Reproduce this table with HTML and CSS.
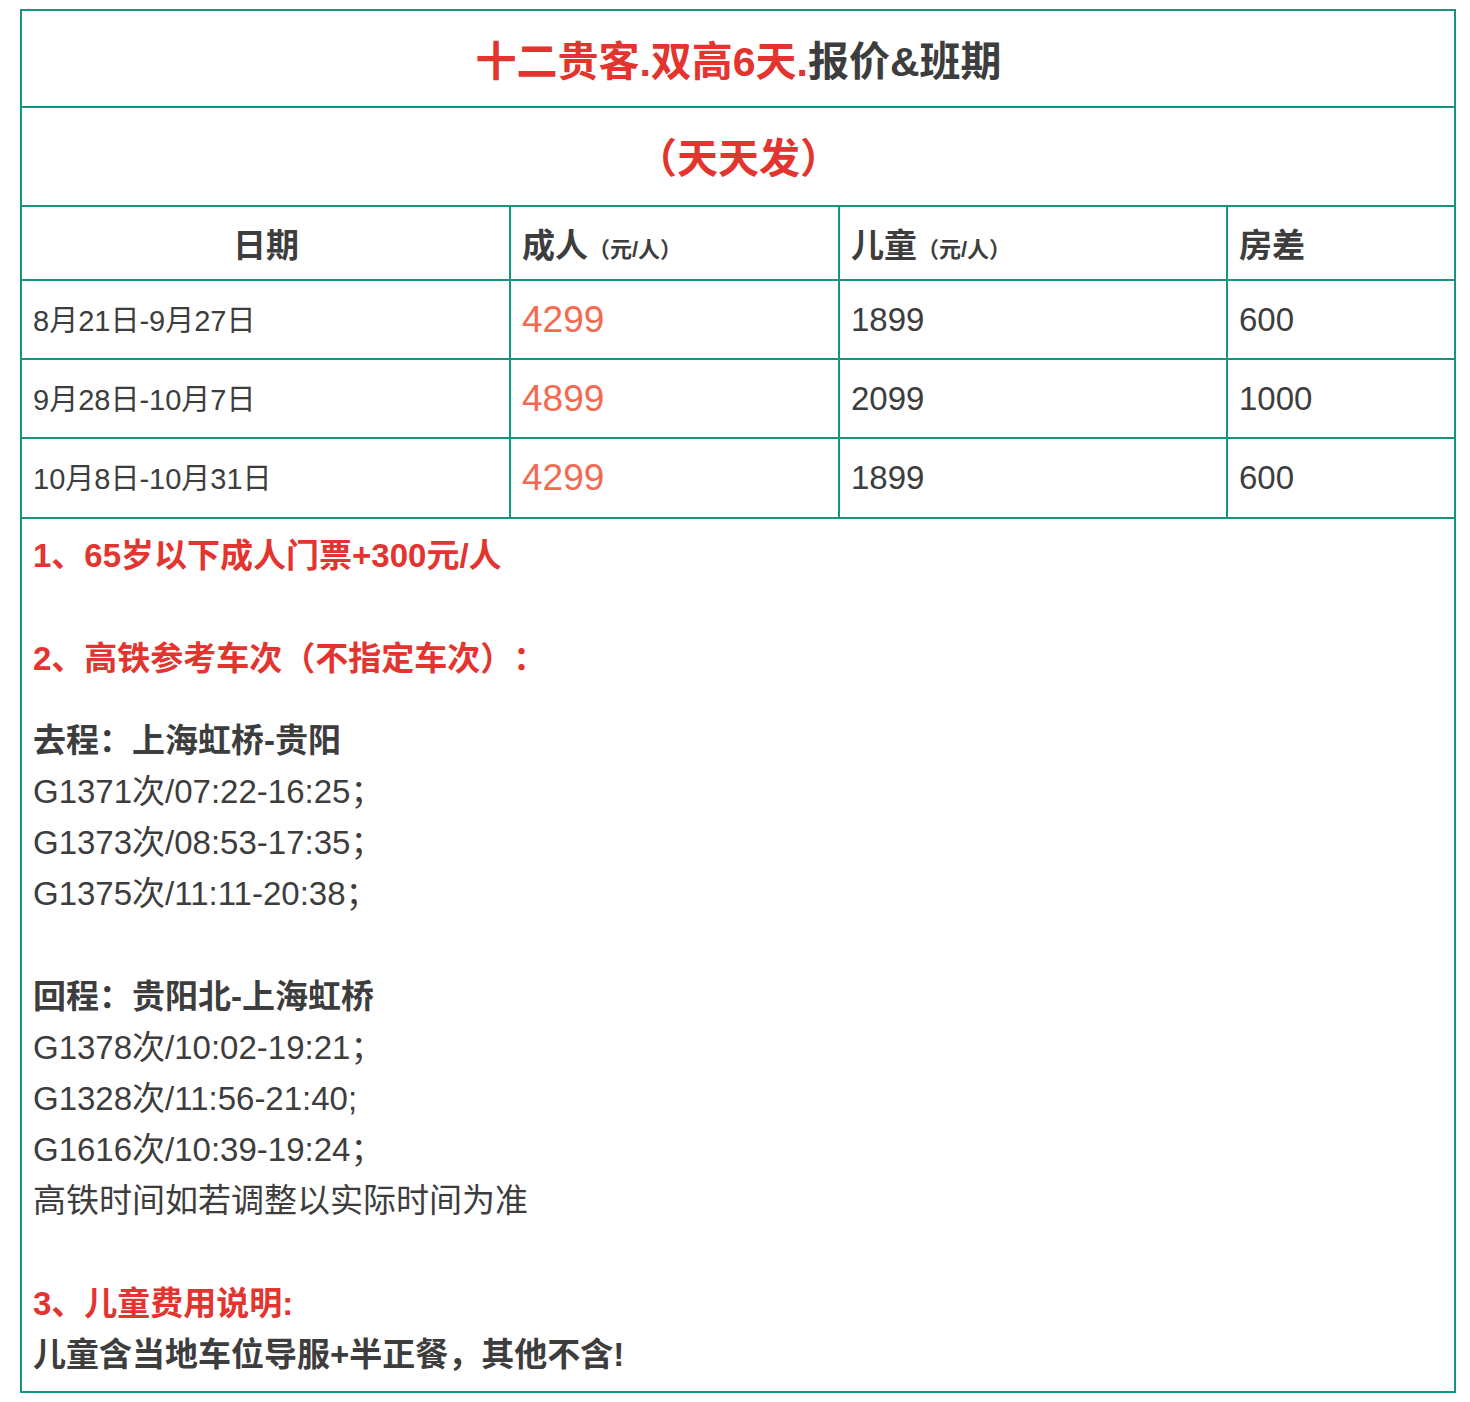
FILE: index.html
```html
<!DOCTYPE html>
<html lang="zh-CN">
<head>
<meta charset="utf-8">
<title>十二贵客.双高6天.报价&amp;班期</title>
<link rel="stylesheet" href="styles.css">
</head>
<body>
<table class="price-table">
  <colgroup>
    <col class="c1"><col class="c2"><col class="c3"><col class="c4">
  </colgroup>
  <tr class="row-title">
    <td colspan="4" class="title"><span class="red">十二贵客.双高6天.</span>报价&amp;班期</td>
  </tr>
  <tr class="row-sub">
    <td colspan="4" class="title red">（天天发）</td>
  </tr>
  <tr class="row-head">
    <td class="head center">日期</td>
    <td class="head">成人<span class="unit">（元/人）</span></td>
    <td class="head">儿童<span class="unit">（元/人）</span></td>
    <td class="head">房差</td>
  </tr>
  <tr class="row-data">
    <td class="date">8月21日-9月27日</td>
    <td class="price">4299</td>
    <td class="num">1899</td>
    <td class="num">600</td>
  </tr>
  <tr class="row-data">
    <td class="date">9月28日-10月7日</td>
    <td class="price">4899</td>
    <td class="num">2099</td>
    <td class="num">1000</td>
  </tr>
  <tr class="row-data last">
    <td class="date">10月8日-10月31日</td>
    <td class="price">4299</td>
    <td class="num">1899</td>
    <td class="num">600</td>
  </tr>
  <tr>
    <td colspan="4" class="notes">
      <div class="line bold red">1、65岁以下成人门票+300元/人</div>
      <div class="gap"></div>
      <div class="line bold red">2、高铁参考车次（不指定车次）：</div>
      <div class="gap-sm"></div>
      <div class="line bold">去程：上海虹桥-贵阳</div>
      <div class="line">G1371次/07:22-16:25；</div>
      <div class="line">G1373次/08:53-17:35；</div>
      <div class="line">G1375次/11:11-20:38；</div>
      <div class="gap"></div>
      <div class="line bold">回程：贵阳北-上海虹桥</div>
      <div class="line">G1378次/10:02-19:21；</div>
      <div class="line">G1328次/11:56-21:40;</div>
      <div class="line">G1616次/10:39-19:24；</div>
      <div class="line">高铁时间如若调整以实际时间为准</div>
      <div class="gap"></div>
      <div class="line bold red">3、儿童费用说明:</div>
      <div class="line bold">儿童含当地车位导服+半正餐，其他不含!</div>
    </td>
  </tr>
</table>
</body>
</html>
```

FILE: styles.css
```css
html, body {
  margin: 0;
  padding: 0;
  background: #ffffff;
}

body {
  padding: 9px 0 0 20px;
  font-family: "Liberation Sans", "Noto Sans CJK SC", sans-serif;
  color: #3d3d3d;
  text-spacing-trim: space-all;
}

.price-table {
  border-collapse: separate;
  border-spacing: 0;
  width: 1436px;
  table-layout: fixed;
  border-top: 2px solid #14937f;
  border-left: 2px solid #14937f;
}

.c1 { width: 489px; }
.c2 { width: 329px; }
.c3 { width: 388px; }
.c4 { width: 228px; }

.price-table td {
  box-sizing: border-box;
  border-right: 2px solid #14937f;
  border-bottom: 2px solid #14937f;
  padding: 0 10px 0 11px;
  vertical-align: middle;
}

.red { color: #e3342f; }

.title {
  text-align: center;
  font-weight: bold;
  font-size: 41px;
  color: #3d3d3d;
}

.title.red { color: #e3342f; }

.row-title td { height: 97px; padding-bottom: 2px; }
.row-sub td { height: 99px; padding-bottom: 4px; }
.row-head td { height: 74px; padding-top: 0; }
.row-data td { height: 79px; }
.row-data.last td { height: 80px; }

.head {
  font-weight: bold;
  font-size: 33px;
}

.center { text-align: center; }

.unit {
  font-size: 22px;
}

.date {
  font-size: 29px;
  padding-bottom: 4px !important;
}

.price {
  font-size: 37px;
  color: #f5694f;
}

.num {
  font-size: 33px;
}

.notes {
  padding-top: 11px !important;
  padding-bottom: 11px !important;
  font-size: 33px;
}

.line {
  line-height: 51px;
  height: 51px;
  white-space: nowrap;
}

.bold { font-weight: bold; }

.gap { height: 52px; }
.gap-sm { height: 31px; }
```
